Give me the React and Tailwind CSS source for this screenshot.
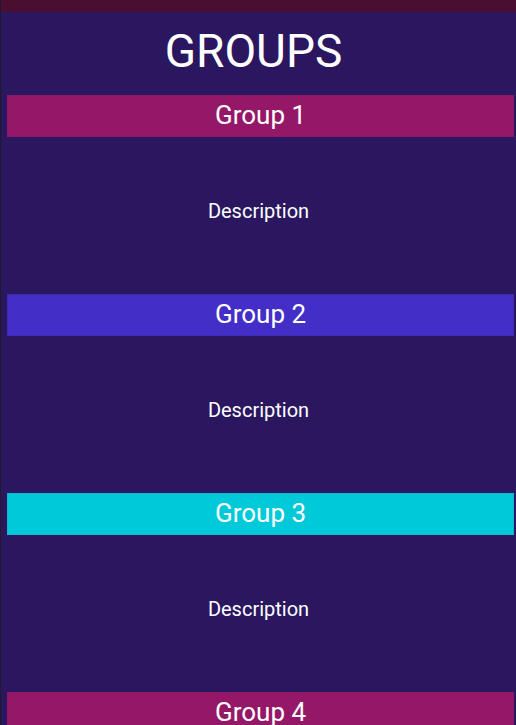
import React from 'react';

const groups = [
    { name: 'Group 1', color: 'bg-[#951868] border-[#8a1a66]' },
    { name: 'Group 2', color: 'bg-[#432ec8] border-[#3d2bb4]' },
    { name: 'Group 3', color: 'bg-[#00c9d9] border-[#0bb8cc]' },
    { name: 'Group 4', color: 'bg-[#951868] border-[#8a1a66]' },
];

const App = () => {
    return (
        <div className="h-[725px] overflow-hidden bg-[#2b1760] border-l border-[#1f1a2e] font-['Roboto',sans-serif] text-white">
            <div className="h-[12px] bg-[#4a0f30]" />
            <h1 className="h-[83px] flex items-center justify-center text-[46px] leading-none pb-[6px] pr-[10px]">GROUPS</h1>
            {groups.map((g) => (
                <div key={g.name}>
                    <div className={`ml-[6px] mr-[2px] h-[42px] border flex items-center justify-center text-[26px] leading-none pb-[3px] ${g.color}`}>
                        {g.name}
                    </div>
                    <div className="h-[157px] flex items-center justify-center pb-[10px] text-[20px]">
                        Description
                    </div>
                </div>
            ))}
        </div>
    );
};

export default App;
